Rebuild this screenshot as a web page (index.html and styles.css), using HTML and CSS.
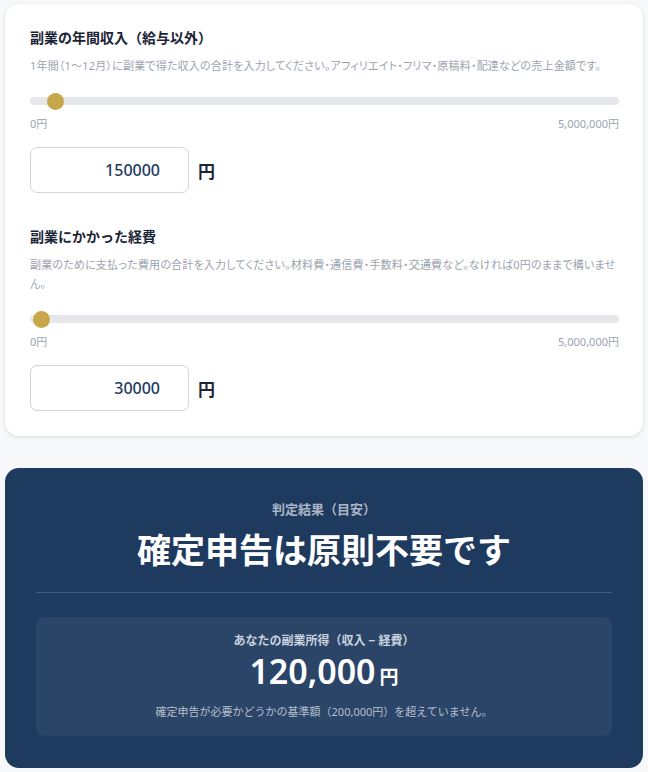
FILE: index.html
```html
<!DOCTYPE html>
<html>
  <head>
    <meta charset="utf-8" />
    <title>副業の確定申告判定</title>
    <link rel="stylesheet" href="styles.css">
  </head>

  <body>
    <div class="page">
      <!-- 入力カード -->
      <div class="card">
        <div class="field">
          <div class="field-title">副業の年間収入（給与以外）</div>
          <div class="field-desc">1年間（1〜12月）に副業で得た収入の合計を入力してください。アフィリエイト・フリマ・原稿料・配達などの売上金額です。</div>
          <input class="slider" type="range" min="0" max="5000000" step="10000" value="150000">
          <div class="range-labels"><span>0円</span><span>5,000,000円</span></div>
          <div class="amount-row">
            <input class="amount" type="text" value="150000">
            <span class="unit">円</span>
          </div>
        </div>

        <div class="field">
          <div class="field-title">副業にかかった経費</div>
          <div class="field-desc">副業のために支払った費用の合計を入力してください。材料費・通信費・手数料・交通費など。なければ0円のままで構いません。</div>
          <input class="slider" type="range" min="0" max="5000000" step="10000" value="30000">
          <div class="range-labels"><span>0円</span><span>5,000,000円</span></div>
          <div class="amount-row">
            <input class="amount" type="text" value="30000">
            <span class="unit">円</span>
          </div>
        </div>
      </div>

      <!-- 判定結果 -->
      <div class="result">
        <div class="result-label">判定結果（目安）</div>
        <div class="result-title">確定申告は原則不要です</div>
        <hr class="result-line">
        <div class="income-box">
          <div class="income-label">あなたの副業所得（収入 − 経費）</div>
          <div class="income-value">120,000<span class="income-unit">円</span></div>
          <div class="income-note">確定申告が必要かどうかの基準額（200,000円）を超えていません。</div>
        </div>
      </div>
    </div>
  </body>
</html>
```

FILE: styles.css
```css
* {
  box-sizing: border-box;
}
body {
  margin: 0;
  background-color: #f7f8fa;
  font-family: "Noto Sans", "Noto Sans CJK JP", sans-serif;
  color: #1e2a3b;
}

.page {
  padding: 4px 5px;
}

/* 入力カード */
.card {
  background-color: #fff;
  border-radius: 14px;
  box-shadow: 0 1px 4px rgba(0, 0, 0, 0.12);
  padding: 24px 24px 25px 25px;
  display: flex;
  flex-direction: column;
  gap: 34px;
}

.field-title {
  font-size: 14px;
  font-weight: bold;
  line-height: 20px;
  color: #1b2536;
}

.field-desc {
  margin-top: 8px;
  font-size: 11px;
  line-height: 19px;
  color: #9ca3af;
  font-feature-settings: "palt";
  letter-spacing: 0.2px;
}

.slider {
  -webkit-appearance: none;
  appearance: none;
  display: block;
  width: 100%;
  height: 16px;
  margin: 18px 0 0;
  background: transparent;
}
.slider::-webkit-slider-runnable-track {
  height: 8px;
  border-radius: 4px;
  background-color: #e5e7eb;
}
.slider::-webkit-slider-thumb {
  -webkit-appearance: none;
  width: 17px;
  height: 17px;
  margin-top: -4.5px;
  border-radius: 50%;
  background-color: #c8a74a;
  border: none;
}

.range-labels {
  margin-top: 7px;
  display: flex;
  justify-content: space-between;
  font-size: 11px;
  line-height: 16px;
  color: #9ca3af;
}

.amount-row {
  margin-top: 15px;
  display: flex;
  align-items: center;
  gap: 9px;
}

.amount {
  width: 159px;
  height: 46px;
  padding: 0 28px 0 12px;
  border: 1px solid #d1d5db;
  border-radius: 7px;
  text-align: right;
  font-family: "Noto Sans", "Noto Sans CJK JP", sans-serif;
  font-size: 16px;
  font-weight: 500;
  color: #1f3a5f;
  background-color: #fff;
}

.unit {
  font-size: 17px;
  font-weight: bold;
  color: #1b2536;
}

/* 判定結果 */
.result {
  margin-top: 32px;
  background-color: #1f3a5f;
  border-radius: 14px;
  padding: 31px 31px 32px 31px;
  text-align: center;
  color: #fff;
}

.result-label {
  font-size: 13px;
  font-weight: bold;
  line-height: 20px;
  color: #aab6c6;
}

.result-title {
  margin-top: 9px;
  font-size: 34px;
  font-weight: bold;
  line-height: 44px;
}

.result-line {
  margin: 20px 0 24px;
  border: none;
  border-top: 1px solid #445b7b;
}

.income-box {
  background-color: #2b4568;
  border-radius: 8px;
  padding: 15px 16px 15px;
}

.income-label {
  font-size: 12px;
  font-weight: bold;
  line-height: 18px;
  color: #c9d2de;
}

.income-value {
  margin-top: 1px;
  font-size: 34px;
  font-weight: 600;
  line-height: 40px;
}

.income-unit {
  margin-left: 4px;
  font-size: 19px;
}

.income-note {
  margin-top: 6px;
  font-size: 11px;
  line-height: 18px;
  color: #b3bfce;
}
```
